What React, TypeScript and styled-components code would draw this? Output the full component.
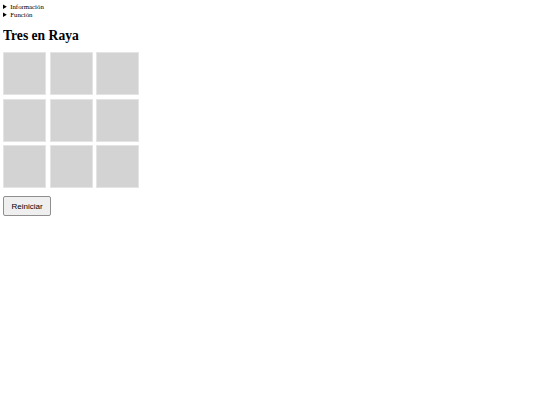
import { useState } from "react";
import styled, { createGlobalStyle } from "styled-components";

const GlobalStyle = createGlobalStyle`
  body {
    margin: 3px;
    background: #ffffff;
    color: #000000;
    font-family: "Liberation Serif", "Times New Roman", serif;
  }
`;

const Page = styled.main`
  display: flex;
  flex-direction: column;
  align-items: flex-start;
`;

const Details = styled.details`
  font-size: 6.8px;
  line-height: 7.6px;

  summary {
    cursor: pointer;
  }
`;

const Title = styled.h1`
  font-size: 13.6px;
  font-weight: 700;
  margin: 8px 0 7px;
  line-height: 19px;
`;

const Board = styled.div`
  display: grid;
  grid-template-columns: repeat(3, 43px);
  grid-auto-rows: 43px;
  gap: 3.5px;
`;

const Cell = styled.button`
  width: 43px;
  height: 43px;
  padding: 0;
  margin: 0;
  background: #d3d3d3;
  border: 1px solid #e4e4e4;
  font-family: "Liberation Sans", Arial, sans-serif;
  font-size: 20px;
  font-weight: 700;
  color: #333;
  cursor: pointer;
`;

const ResetButton = styled.button`
  margin-top: 8px;
  width: 48px;
  height: 20px;
  padding: 0;
  background: #efefef;
  border: 1px solid #8f8f8f;
  border-radius: 2px;
  font-family: "Liberation Sans", Arial, sans-serif;
  font-size: 8px;
  color: #000;
  cursor: pointer;
`;

export default function App() {
  const [cells, setCells] = useState<string[]>(Array(9).fill(""));
  const [turn, setTurn] = useState("X");

  const play = (i: number) => {
    if (cells[i]) return;
    const next = [...cells];
    next[i] = turn;
    setCells(next);
    setTurn(turn === "X" ? "O" : "X");
  };

  return (
    <Page>
      <GlobalStyle />
      <Details>
        <summary>Información</summary>
        <p>Juego clásico de tres en raya para dos jugadores.</p>
      </Details>
      <Details>
        <summary>Función</summary>
        <p>Haz clic en una casilla para colocar tu ficha.</p>
      </Details>
      <Title>Tres en Raya</Title>
      <Board>
        {cells.map((c, i) => (
          <Cell key={i} onClick={() => play(i)}>
            {c}
          </Cell>
        ))}
      </Board>
      <ResetButton
        onClick={() => {
          setCells(Array(9).fill(""));
          setTurn("X");
        }}
      >
        Reiniciar
      </ResetButton>
    </Page>
  );
}
